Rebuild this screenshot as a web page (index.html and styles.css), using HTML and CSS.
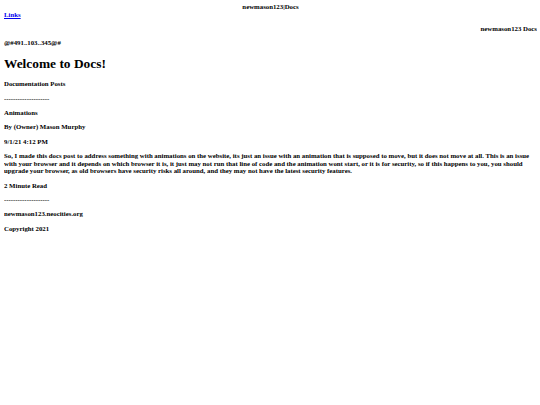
FILE: index.html
```html
<!DOCTYPE html>
<html>
<head>
<meta charset="utf-8">
<title>newmason123|Docs</title>
<link rel="stylesheet" href="styles.css">
</head>
<body>
<div class="title">newmason123|Docs</div>
<div class="nav"><a href="#" class="link">Links</a></div>
<p class="brand">newmason123 Docs</p>
<p class="small">@#491..103..345@#</p>
<h1 class="heading">Welcome to Docs!</h1>
<p class="small">Documentation Posts</p>
<p class="small">--------------------</p>
<p class="small">Animations</p>
<p class="small">By (Owner) Mason Murphy</p>
<p class="small">9/1/21 4:12 PM</p>
<p class="small">So, I made this docs post to address something with animations on the website, its just an issue with an animation that is supposed to move, but it does not move at all. This is an issue with your browser and it depends on which browser it is, it just may not run that line of code and the animation wont start, or it is for security, so if this happens to you, you should upgrade your browser, as old browsers have security risks all around, and they may not have the latest security features.</p>
<p class="small">2 Minute Read</p>
<p class="small">--------------------</p>
<p class="small">newmason123.neocities.org</p>
<p class="small">Copyright 2021</p>
</body>
</html>
```
FILE: styles.css
```css
html, body {
  background: #ffffff;
}
body {
  margin: 3px 3px 3px 4px;
  font-family: "Liberation Serif", "Times New Roman", serif;
  font-weight: bold;
  font-size: 6.8px;
  line-height: 7.5px;
  color: #000000;
}
.title {
  text-align: center;
}
.nav {
  margin: 0;
}
.link {
  color: #0000ee;
  text-decoration: underline;
}
.brand {
  text-align: right;
  margin: 6.9px 0;
}
.small {
  margin: 6.9px 0;
}
.heading {
  font-size: 13.4px;
  line-height: 15.4px;
  margin: 9px 0;
}
```
